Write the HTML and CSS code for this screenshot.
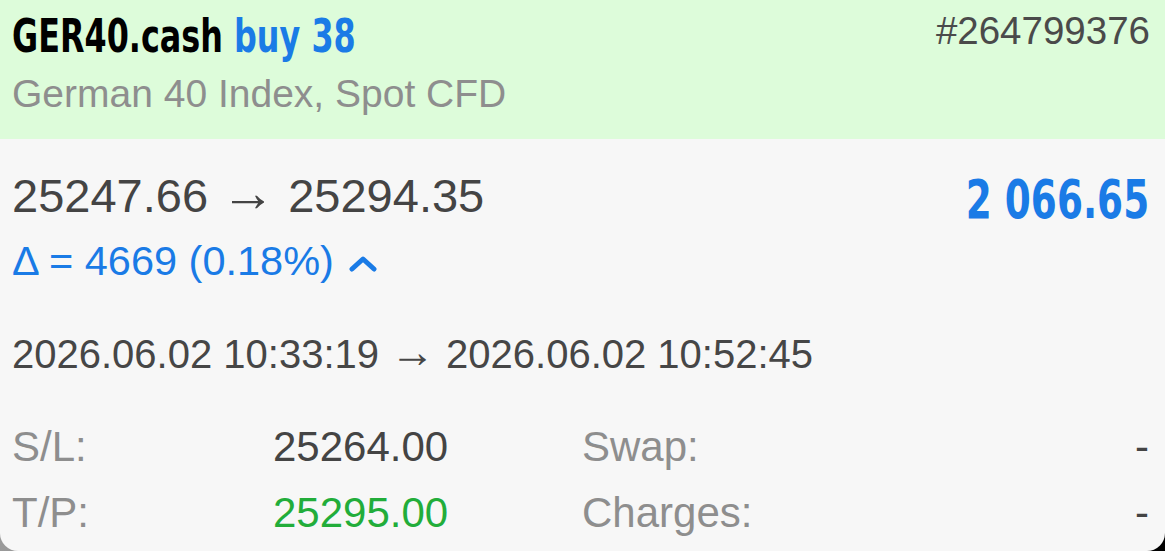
FILE: index.html
```html
<!DOCTYPE html>
<html lang="en">
<head>
    <meta charset="UTF-8">
    <meta name="viewport" content="width=device-width, initial-scale=1.0">
    <title>GER40.cash</title>
    <link rel="stylesheet" href="styles.css">
</head>
<body>
    <div class="card">
        <div class="header">
            <div class="symbol">
                <div class="title"><span class="narrow">GER40.cash <span class="side">buy 38</span></span></div>
                <div class="desc">German 40 Index, Spot CFD</div>
            </div>
            <div class="ticket">#264799376</div>
        </div>

        <div class="content">
            <div class="prices">
                <div class="prices-left">
                    <div class="price-line">25247.66 <span class="arrow">&rarr;</span> 25294.35</div>
                    <div class="delta">
                        &Delta; = 4669 (0.18%)
                        <svg class="chevron" width="28" height="18" viewBox="0 0 28 18">
                            <polyline points="3,14 14,4 25,14" fill="none" stroke="#1a7be6" stroke-width="5" stroke-linecap="round" stroke-linejoin="round"/>
                        </svg>
                    </div>
                </div>
                <div class="profit"><span class="narrow">2 066.65</span></div>
            </div>

            <div class="dates">2026.06.02 10:33:19 <span class="arrow small">&rarr;</span> 2026.06.02 10:52:45</div>

            <div class="details">
                <div class="label">S/L:</div>
                <div class="value">25264.00</div>
                <div class="label">Swap:</div>
                <div class="value right">-</div>

                <div class="label">T/P:</div>
                <div class="value green">25295.00</div>
                <div class="label">Charges:</div>
                <div class="value right">-</div>
            </div>
        </div>
    </div>
</body>
</html>
```

FILE: styles.css
```css
html {
    background: linear-gradient(to right, #9a9a9a, #000);
}

body {
    margin: 0;
    padding: 0;
    overflow: hidden;
    font-family: 'Liberation Sans', Arial, sans-serif;
    color: #464646;
}

.card {
    height: 551px;
    background: #f7f7f7;
    border-radius: 0 0 18px 18px;
    overflow: hidden;
}

.header {
    display: flex;
    justify-content: space-between;
    align-items: flex-start;
    height: 139px;
    box-sizing: border-box;
    padding: 8px 15px 0 12px;
    background: #ddfcda;
}

/* no condensed face installed, so squeeze the bold one */
.narrow {
    display: inline-block;
    white-space: nowrap;
    transform: scaleX(0.77);
    transform-origin: left center;
}

.title {
    font-family: 'DejaVu Sans Condensed', 'DejaVu Sans', sans-serif;
    font-weight: bold;
    font-size: 46px;
    line-height: 56px;
    color: #000;
}

.side {
    color: #1a7be6;
}

.desc {
    margin-top: 8px;
    font-size: 39px;
    line-height: 44px;
    color: #8e8e8e;
}

.ticket {
    padding-top: 1px;
    font-size: 38.5px;
    line-height: 44px;
    color: #4a4a4a;
}

.content {
    padding: 29px 16px 0 12px;
}

.prices {
    display: flex;
    justify-content: space-between;
    align-items: flex-start;
}

.price-line {
    font-size: 47px;
    line-height: 56px;
    color: #444;
}

.arrow {
    font-size: 1.15em;
    line-height: 0;
    vertical-align: 1px;
}

.arrow.small {
    font-size: 1.12em;
}

.delta {
    margin-top: 12px;
    font-size: 41.5px;
    line-height: 50px;
    color: #1a7be6;
}

.chevron {
    margin-left: 4px;
    vertical-align: 2px;
}

.profit {
    font-family: 'DejaVu Sans Condensed', 'DejaVu Sans', sans-serif;
    font-weight: bold;
    font-size: 54px;
    line-height: 64px;
    color: #1a7be6;
}

.profit .narrow {
    transform-origin: right center;
}

.dates {
    margin-top: 43px;
    font-size: 40px;
    line-height: 50px;
    color: #464646;
}

.details {
    display: grid;
    grid-template-columns: 261px 309px 1fr auto;
    margin-top: 35px;
    font-size: 42px;
    line-height: 66px;
}

.label {
    color: #8e8e8e;
}

.value {
    color: #444;
}

.green {
    color: #22ad3a;
}

.right {
    text-align: right;
}
```
